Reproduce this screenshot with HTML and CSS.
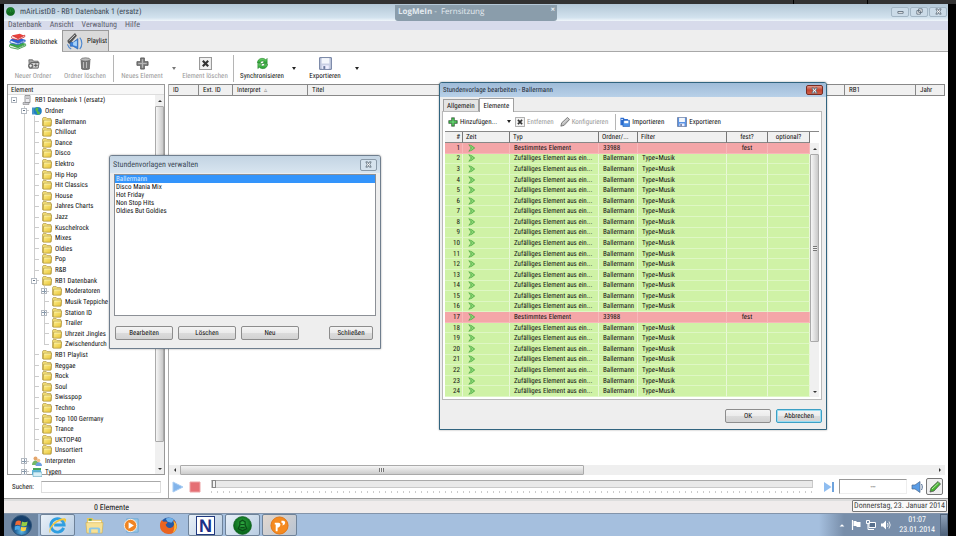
FILE: index.html
```html
<!DOCTYPE html>
<html lang="de">
<head>
<meta charset="utf-8">
<title>mAirListDB - RB1 Datenbank 1 (ersatz)</title>
<link rel="stylesheet" href="styles.css">
</head>
<body>
<svg class="sprite" aria-hidden="true">
  <defs>
    <linearGradient id="gFolder" x1="0" y1="0" x2="1" y2="1"><stop offset="0" stop-color="#fff08c"/><stop offset="1" stop-color="#e6c238"/></linearGradient>
    <linearGradient id="gGreen" x1="0" y1="0" x2="0" y2="1"><stop offset="0" stop-color="#6fd06a"/><stop offset="1" stop-color="#1f9a2c"/></linearGradient>
    <radialGradient id="gBall" cx=".5" cy=".4"><stop offset="0" stop-color="#2ea640"/><stop offset="1" stop-color="#0b6a1d"/></radialGradient>
    <radialGradient id="gOrb" cx=".5" cy=".8"><stop offset="0" stop-color="#5fb9e6"/><stop offset=".6" stop-color="#25659c"/><stop offset="1" stop-color="#173f6b"/></radialGradient>
  </defs>
  <symbol id="folder" viewBox="0 0 10 10"><path d="M.4 2 1.200.6h3l1 1h3.600l.4 1.400V8.500H.4z" fill="#f6e27a" stroke="#9c8230" stroke-width=".6"/><path d="M1.600 3.200h8l-.8 6H1.200z" fill="url(#gFolder)" stroke="#a58a30" stroke-width=".6"/><path d="M2.300 4h6.500" stroke="#fffbd0" stroke-width=".6"/></symbol>
  <symbol id="server" viewBox="0 0 10 10"><path d="M3 .5h5v7H3z" fill="#ececf0" stroke="#777" stroke-width=".7"/><path d="M4 2h3M4 3.500h3" stroke="#888" stroke-width=".6"/><path d="M1 7.500h6v2H1z" fill="#c9c9d0" stroke="#777" stroke-width=".5"/></symbol>
  <symbol id="globe" viewBox="0 0 10 10"><path d="M0 1.500h5v7H0z" fill="#4a95c9"/><circle cx="5.800" cy="5" r="4" fill="#1f7fc4"/><path d="M4 2c2-1 3 0 2 2s2 1 2 3-3 2-3 0-3-2-1-5z" fill="#57b947"/></symbol>
  <symbol id="people" viewBox="0 0 10 10"><circle cx="3.500" cy="2.500" r="2" fill="#e3a56b"/><path d="M0 9c0-6 7-6 7 0z" fill="#73b865"/><circle cx="6.500" cy="4.500" r="1.800" fill="#f2c08e"/><path d="M3.500 10c0-5 6.500-5 6.500 0z" fill="#6e9fe0"/></symbol>
  <symbol id="types" viewBox="0 0 10 10"><path d="M1 1h8v5H1z" fill="#46a857"/><path d="M0 3h9v5H0z" fill="#63b7d9"/><path d="M1 5h9v4.500H1z" fill="#d5eef6" stroke="#4b98b5" stroke-width=".5"/></symbol>
  <symbol id="arrow" viewBox="0 0 10 10"><path d="M1 .8 4.500 2 8.500 5 4.500 8 1 9.200 3.800 5z" fill="#66c455" stroke="#3f9a38" stroke-width=".6"/><path d="M2.500 2.200 6.500 5 2.500 7.800" fill="none" stroke="#b9e7a0" stroke-width=".6"/></symbol>
  <symbol id="books" viewBox="0 0 20 18"><path d="M1 11.500 11 9.500l8 2-9 4.500L1 13.500z" fill="#3aa84a"/><path d="M1 12.500c-1 2 0 3 1 3.300l8 1.700 8.500-3.700v-1.500L10 16z" fill="#e8f5e6" stroke="#2b9138" stroke-width=".9"/><path d="M2 6.500 11 5l7 2-8 4L2 8.500z" fill="#2b62d8"/><path d="M2 7.500c-1.500 1.500-1 3 0 3.300l8 1.700 8-3.500V7.500L10 11z" fill="#e5ecfb" stroke="#2458c4" stroke-width=".9"/><path d="M4 2 12 .5l5 2-7 4-6-2z" fill="#e8413c"/><path d="M4 2.500c-1.500 1-1.500 3 0 3.300l6 1.500 7.500-3.500V2L10 5.800z" fill="#fbeae9" stroke="#cf2e2c" stroke-width=".9"/></symbol>
  <symbol id="notes" viewBox="0 0 18 18"><path d="M1 8 9 0l2 3-7 8c-2 1-3-1-3-3z" fill="#555"/><path d="M3 8 9 2" stroke="#ddd"/><path d="M4 10h3l5-4v11l-5-3H4z" fill="#3e83dd" stroke="#205ba8" stroke-width=".7"/><path d="M7 10l4-2v6l-4-1z" fill="#a6d2fa"/><path d="M14 5c3 3 3 9 0 12M1 12c1 3 2 4 4 5" fill="none" stroke="#4e88d0" stroke-width="1.200"/></symbol>
  <symbol id="newfolder" viewBox="0 0 14 12"><path d="M2 2h4l1 1.500h5V5H4.500L2.500 10z" fill="#aaa" stroke="#555" stroke-width=".8"/><path d="M4 5h9l-1 6H2.500z" fill="#d8d8d8" stroke="#555" stroke-width=".9"/><circle cx="4" cy="8.500" r="2.800" fill="#666"/><path d="M4 6.900v3.200M2.400 8.500h3.200" stroke="#fff"/><path d="M9.500 6v4M7.500 8h4" stroke="#555"/></symbol>
  <symbol id="bin" viewBox="0 0 12 13"><path d="M1.500 2.500h9l-.7 9.500c-2 1-6 1-7.600 0z" fill="#777" stroke="#444" stroke-width=".6"/><ellipse cx="6" cy="2.500" rx="4.700" ry="1.700" fill="#bbb" stroke="#555" stroke-width=".6"/><path d="M4 5v6M7 5v6" stroke="#bbb"/></symbol>
  <symbol id="plus" viewBox="0 0 14 14"><path d="M5 1h4v4h4v4H9v4H5V9H1V5h4z" fill="currentColor" stroke="#444" stroke-width=".8"/><path d="M7 2.500v9M2.500 7h9" stroke="#fff" stroke-opacity=".4" stroke-width="1.200"/></symbol>
  <symbol id="cross" viewBox="0 0 12 12"><path d="M.5.5h11v11H.5z" fill="#f2f2f2" stroke="#999"/><path d="M3.500 3.500l5 5M8.500 3.500l-5 5" stroke="#333" stroke-width="2"/></symbol>
  <symbol id="sync" viewBox="0 0 14 13"><path d="M1.500 6c0-5 6-6.500 9-3.500L12 1v5.500H7L8.800 4.500C7 3 5 4 4.500 6z" fill="url(#gGreen)" stroke="#22802c" stroke-width=".6"/><path d="M12.500 7c0 5-6 6.500-9 3.500L2 12V6.500h5L5.200 8.500C7 10 9 9 9.500 7z" fill="url(#gGreen)" stroke="#22802c" stroke-width=".6"/></symbol>
  <symbol id="disk" viewBox="0 0 12 12"><path d="M.6.6h10.800v10.800H.6z" fill="currentColor" stroke="#68779a" stroke-width=".9"/><path d="M2.500 1h7v5h-7z" fill="#f4f7fc"/><path d="M3 7.800h6V11H3z" fill="#eef"/><path d="M4 8.400h1.800V11H4z" fill="#68779a"/></symbol>
  <symbol id="import" viewBox="0 0 12 12"><path d="M.5 1h4l1 1.500h4V10h-9z" fill="#2f6fd2"/><path d="M3.500 4h8v7.500h-8z" fill="#4a90e8" stroke="#1d56ad" stroke-width=".7"/><path d="M5 4.500h5v3H5z" fill="#fff"/><path d="M1.500 3h2" stroke="#fff"/></symbol>
  <symbol id="pencil" viewBox="0 0 12 12"><path d="M1 11l1-4 7-6.500L11.500 3 5 10z" fill="currentColor" stroke="#555" stroke-width=".8"/><path d="M3 8 9.500 2" stroke="#fff" stroke-opacity=".6"/></symbol>
  <symbol id="speaker" viewBox="0 0 12 12"><path d="M1 4h3l5-3.500v11L4 8H1z" fill="currentColor" stroke="#4b678e" stroke-width=".7"/><path d="M10.500 3c1 2 1 4 0 6" fill="none" stroke="#4b678e"/></symbol>
  <symbol id="ball" viewBox="0 0 18 18"><circle cx="9" cy="9" r="8.500" fill="url(#gBall)" stroke="#0a5a18" stroke-width=".6"/><path d="M6.500 5.500 9 4l2.500 1.500v3L13 12l-4 2-4-2 1.500-3.500z" fill="none" stroke="#0a4d18" stroke-width="1.200"/><path d="M7 8h4M7 11h4" stroke="#0a4d18"/></symbol>
</svg>

<div class="session-strip"><i></i><i></i></div>
<main class="window">
  <header class="titlebar">
    <svg class="app-icon"><use href="#ball"/></svg>
    <h1>mAirListDB - RB1 Datenbank 1 (ersatz)</h1>
    <div class="window-buttons">
      <button aria-label="Minimieren"><svg viewBox="0 0 8 8"><path d="M1 4h6v2H1z"/></svg></button>
      <button aria-label="Wiederherstellen"><svg viewBox="0 0 8 8"><path d="M3 1h4v4H3zM1 3h4v4H1z"/></svg></button>
      <button aria-label="Schließen"><svg viewBox="0 0 8 8"><path d="M1 1h2l1 2 1-2h2L5.500 4 7 7H5L4 5 3 7H1l1.500-3z"/></svg></button>
    </div>
  </header>
  <nav class="menubar"><a href="#">Datenbank</a><a href="#">Ansicht</a><a href="#">Verwaltung</a><a href="#">Hilfe</a></nav>
  <div class="main-tabs">
    <button class="main-tab active"><svg><use href="#books"/></svg>Bibliothek</button>
    <button class="main-tab"><svg><use href="#notes"/></svg>Playlist</button>
  </div>
  <div class="toolbar">
    <button class="tool off"><svg><use href="#newfolder"/></svg>Neuer Ordner</button>
    <button class="tool off"><svg><use href="#bin"/></svg>Ordner löschen</button>
    <span class="separator"></span>
    <button class="tool off plus"><svg><use href="#plus"/></svg>Neues Element</button>
    <button class="drop off" aria-label="Mehr"></button>
    <button class="tool off"><svg><use href="#cross"/></svg>Element löschen</button>
    <span class="separator"></span>
    <button class="tool"><svg><use href="#sync"/></svg>Synchronisieren</button>
    <button class="drop" aria-label="Mehr"></button>
    <button class="tool save"><svg><use href="#disk"/></svg>Exportieren</button>
    <button class="drop" aria-label="Mehr"></button>
  </div>

  <div class="content">
    <section class="side">
      <div class="tree-box">
        <div class="tree-head">Element</div>
        <div class="tree-body">
          <ul class="tree" id="tree"></ul>
          <div class="vscroll"><span class="up"></span><span class="thumb"></span><span class="down"></span></div>
        </div>
      </div>
      <div class="search"><label for="q">Suchen:</label><input id="q" type="text"></div>
    </section>
    <section class="list">
      <table class="list-table">
        <colgroup><col class="c-id"><col class="c-ext"><col class="c-int"><col><col class="c-rb"><col class="c-year"></colgroup>
        <thead><tr><th>ID</th><th>Ext. ID</th><th>Interpret <span class="sort">▵</span></th><th>Titel</th><th>RB1</th><th>Jahr</th></tr></thead>
      </table>
      <div class="hscroll"><span class="left"></span><span class="hthumb"><i></i></span><span class="right"></span></div>
      <div class="player">
        <button class="play" aria-label="Abspielen"><svg viewBox="0 0 12 12"><path d="M1 1l10 5-10 5z" fill="#82b4ea" stroke="#a9cdf3"/></svg></button>
        <button class="stop" aria-label="Stopp"><svg viewBox="0 0 12 12"><path d="M1 1h10v10H1z" fill="#e56f74" stroke="#eda4a6"/></svg></button>
        <div class="seek"><input type="range" value="0" aria-label="Position"><div class="ticks"></div></div>
        <button class="next" aria-label="Weiter"><svg viewBox="0 0 12 12"><path d="M1 1l7.500 5L1 11z" fill="#8fbdf0"/><path d="M9 1h2v10H9z" fill="#6fa3dc"/></svg></button>
        <output class="display">---</output>
        <button class="sound" aria-label="Ton"><svg><use href="#speaker"/></svg></button>
        <button class="edit" aria-label="Bearbeiten"><svg><use href="#pencil"/></svg></button>
      </div>
    </section>
  </div>
  <footer class="status">0 Elemente</footer>
</main>

<footer class="taskbar">
  <button class="start" aria-label="Start"><svg viewBox="0 0 22 22"><circle cx="11" cy="11" r="10.500" fill="url(#gOrb)" stroke="#2b5278"/><path d="M5 7q3-2 5.500-.5L9.800 11Q7 9.500 4.200 11z" fill="#ee6a35"/><path d="M11.500 6.800q3 1.500 6 0L16.500 11q-3 1.500-5.700.2z" fill="#96cf43"/><path d="M4 12q3-1.500 5.600 0L9 16q-2.500-1.500-5 0z" fill="#4aa7e9"/><path d="M10.600 12.300q3 1.300 5.700 0l-1 4q-2.500 1.300-5.200 0z" fill="#ffd044"/></svg></button>
  <button class="task open" aria-label="Internet Explorer"><svg viewBox="0 0 20 20"><path d="M16.500 12.500A7 7 0 1 1 17 9.500H6.500" fill="none" stroke="#2f9ee0" stroke-width="3"/><path d="M2 18C-1 13 8 2 18 2.500 20 3 19 6 17.500 8 18 5 17 4 14 4.800 8 6 2 13 2.500 16.500z" fill="#f3c63a"/></svg></button>
  <button class="task" aria-label="Explorer"><svg viewBox="0 0 20 20"><path d="M2 2h6l1 2h9v13H2z" fill="#e6c55f"/><path d="M3 5h14v4H3z" fill="#fffbe5"/><path d="M4 3h3v2H4z" fill="#55a54e"/><path d="M1 7h18l-1 11H2z" fill="#f8e195" stroke="#d3ab42" stroke-width=".6"/><path d="M4 18v-4q0-2 2-2h8q2 0 2 2v4h-2.500v-4h-7v4z" fill="#8bc7e8"/></svg></button>
  <button class="task" aria-label="Media Player"><svg viewBox="0 0 20 20"><path d="M5 3h12v14H5z" fill="#9cc9e9" stroke="#6faad3"/><circle cx="9" cy="10" r="6.500" fill="#f08422" stroke="#fff0dd"/><path d="M7 6.500 12.500 10 7 13.500z" fill="#fff"/></svg></button>
  <button class="task" aria-label="Firefox"><svg viewBox="0 0 20 20"><circle cx="10" cy="10" r="8.500" fill="#2459a5"/><path d="M7 3q5-3 9 1l-3 3-4-1z" fill="#6eb0e8"/><path d="M2.500 4.500 5 6q3-1 4 1L7 9q1 4 5 3.500 3-.5 4-3.500 0-3-1-5 4 3 3.800 8Q17 19 10 19 1 18 1 10 1 7 2.500 4.500z" fill="#ea6420"/><path d="M15 5q4 3 3.500 7-1 4-4 5.500 3-5 .5-12.500z" fill="#f9b936"/></svg></button>
  <button class="task open" aria-label="N"><span class="n-tile">N</span></button>
  <button class="task open" aria-label="mAirList"><svg><use href="#ball"/></svg></button>
  <button class="task warm" aria-label="Player"><svg viewBox="0 0 20 20"><circle cx="10" cy="10" r="9" fill="#f58a1f" stroke="#e07412"/><path d="M5 7h4q2 0 2 2t-2 3H8v4H6V9H5zM12 5h2q2 0 2 2t-3 3q1-2 0-3h-1z" fill="#fff"/></svg></button>
  <div class="tray">
    <svg class="tri" viewBox="0 0 10 10"><path d="M2 7l3-3 3 3z" fill="#fff"/></svg>
    <svg viewBox="0 0 10 10"><path d="M1.500 0v10" stroke="#fff" stroke-width="1.200"/><path d="M2.500 1h3v1h4v5h-4V6h-3z" fill="#fff"/></svg>
    <svg viewBox="0 0 10 10"><path d="M3 2.500h6.500v5H3z" fill="#58708d" stroke="#fff"/><path d="M.5.5h3v3h-3zM2 4v5.500h6" fill="none" stroke="#fff"/></svg>
    <svg viewBox="0 0 10 10"><path d="M0 3.500h2L5 .5v9L2 6.500H0z" fill="#fff"/><path d="M6.500 3q1 2 0 4M8 1.500q2.500 3.500 0 7" fill="none" stroke="#fff" stroke-width=".8"/></svg>
    <time class="clock">01:07<br>23.01.2014</time>
    <button class="peek" aria-label="Desktop anzeigen"></button>
  </div>
</footer>

<div class="remote-tab"><b>LogMeIn</b> -&nbsp; Fernsitzung<button aria-label="Leiste schließen">×</button></div>
<div class="tooltip">Donnerstag, 23. Januar 2014</div>

<section class="dialog manage" role="dialog" aria-labelledby="t1">
  <header class="dialog-title"><h2 id="t1">Stundenvorlagen verwalten</h2><button class="close pale" aria-label="Schließen"><svg viewBox="0 0 8 8"><path d="M1 1h2l1 2 1-2h2L5.500 4 7 7H5L4 5 3 7H1l1.500-3z"/></svg></button></header>
  <ul class="listbox" role="listbox" aria-label="Stundenvorlagen">
    <li role="option" aria-selected="true">Ballermann</li>
    <li role="option">Disco Mania Mix</li>
    <li role="option">Hot Friday</li>
    <li role="option">Non Stop Hits</li>
    <li role="option">Oldies But Goldies</li>
  </ul>
  <div class="manage-buttons"><button class="btn">Bearbeiten</button><button class="btn">Löschen</button><button class="btn">Neu</button><button class="btn end">Schließen</button></div>
</section>

<section class="dialog editor" role="dialog" aria-labelledby="t2">
  <header class="dialog-title"><h2 id="t2">Stundenvorlage bearbeiten - Ballermann</h2><button class="close red" aria-label="Schließen"><svg viewBox="0 0 8 8"><path d="M1 1h2l1 2 1-2h2L5.500 4 7 7H5L4 5 3 7H1l1.500-3z"/></svg></button></header>
  <div class="tabs"><button class="tab">Allgemein</button><button class="tab active">Elemente</button></div>
  <div class="page">
    <div class="page-tools">
      <button class="ptool add"><svg><use href="#plus"/></svg>Hinzufügen...</button>
      <button class="drop" aria-label="Mehr"></button>
      <button class="ptool off"><svg><use href="#cross"/></svg>Entfernen</button>
      <button class="ptool off pen"><svg><use href="#pencil"/></svg>Konfigurieren</button>
      <span class="separator"></span>
      <button class="ptool imp"><svg><use href="#import"/></svg>Importieren</button>
      <button class="ptool save"><svg><use href="#disk"/></svg>Exportieren</button>
    </div>
    <div class="grid-box">
      <table class="grid">
        <colgroup><col class="g-n"><col class="g-time"><col class="g-type"><col class="g-folder"><col><col class="g-fix"><col class="g-opt"></colgroup>
        <thead><tr><th>#</th><th>Zeit</th><th>Typ</th><th>Ordner/...</th><th>Filter</th><th>fest?</th><th>optional?</th></tr></thead>
        <tbody id="rows"></tbody>
      </table>
      <div class="vscroll"><span class="up"></span><span class="thumb"><i></i></span><span class="down"></span></div>
    </div>
  </div>
  <div class="dialog-buttons"><button class="btn">OK</button><button class="btn default">Abbrechen</button></div>
</section>
<script src="app.js"></script>
</body>
</html>
```
FILE: styles.css
```css
* { box-sizing: border-box; }
html, body { height: 100%; }
body {
  margin: 0;
  background: #000;
  color: #111;
  font: 7px/10px "Roboto Condensed", "DejaVu Sans Condensed", sans-serif;
  text-rendering: geometricPrecision;
  display: flex;
  flex-direction: column;
  overflow: hidden;
  position: relative;
}
button, input { font: inherit; color: inherit; margin: 0; padding: 0; text-rendering: inherit; }
button { border: 0; background: none; white-space: nowrap; }
h1, h2, ul { margin: 0; padding: 0; font-weight: normal; list-style: none; }
h1, h2 { font-size: 8px; line-height: 12px; }
a { color: inherit; text-decoration: none; }
svg { display: block; flex: none; width: 10px; height: 10px; }
.sprite { position: absolute; width: 0; height: 0; }
table { border-collapse: separate; border-spacing: 0; table-layout: fixed; width: 100%; }
th { font-weight: normal; text-align: left; }

.session-strip { flex: none; height: 4px; background: #323232; display: flex; justify-content: flex-end; gap: 73px; padding-right: 88px; }
.session-strip i { width: 1px; background: #000; }

.window { flex: 1; min-height: 0; margin: 0 8px 0 4px; background: #fff; display: flex; flex-direction: column; }
.titlebar { flex: none; height: 17px; display: flex; align-items: center; gap: 5px; padding: 0 1px 2px 2px; background: linear-gradient(#b3c7d6, #d2e2ee 80%, #f0f6fa); color: #3d4a56; }
.titlebar h1 { flex: 1; }
.app-icon { width: 9px; height: 9px; }
.window-buttons { display: flex; gap: 1px; }
.window-buttons button { width: 18px; height: 10px; display: grid; place-items: center; border: 1px solid #a3b6c5; border-radius: 2px; background: #cbdbe8; }
.window-buttons svg, .close svg { width: 7px; height: 7px; fill: #fff; stroke: #5e6d7a; }
.menubar { flex: none; height: 9px; display: flex; gap: 8px; padding-left: 4px; background: #d7dbeb; color: #5c606c; font-size: 8px; line-height: 8px; }

.main-tabs { flex: none; height: 22px; display: flex; align-items: flex-end; background: #eee; border-bottom: 1px solid #a8a8a8; padding-right: 1px; }
.main-tab { display: flex; align-items: center; gap: 3px; width: 47px; height: 21px; padding: 0 3px; background: #dadada; border: 1px solid #9a9a9a; border-bottom: 0; }
.main-tab.active { width: 58px; height: 22px; padding: 0 4px; margin-bottom: -1px; background: #fff; border-color: #fff; }
.main-tab svg { width: 18px; height: 17px; }

.toolbar { flex: none; height: 32px; display: flex; align-items: stretch; gap: 2px; padding: 3px 0 2px 4px; }
.tool { display: flex; flex-direction: column; align-items: center; gap: 1px; width: 50px; padding-top: 2px; color: #111; }
.tool svg { width: 13px; height: 13px; }
.off, .tool.off { color: #999; }
.plus svg { color: #888; }
.save svg { color: #c9d0e4; }
.separator { width: 1px; margin: 0 1px; background: #b5b5b5; }
.drop { width: 9px; display: grid; place-items: center; }
.drop::before { content: ""; border: 2px solid transparent; border-top: 3px solid #222; border-bottom: 0; }
.drop.off::before { border-top-color: #777; }

.content { flex: 1; min-height: 0; display: grid; grid-template-columns: 161px 1fr; grid-template-rows: 100%; gap: 3px; padding-right: 3px; border-bottom: 1px solid #999; }
.side, .list { display: flex; flex-direction: column; min-height: 0; min-width: 0; }
.side { padding-left: 3px; }
.tree-box { flex: 1; min-height: 0; display: flex; flex-direction: column; border: 1px solid #999; }
.tree-head { flex: none; height: 10px; line-height: 10px; padding-left: 3px; background: #f7f7f7; border-bottom: 1px solid #ddd; }
.tree-body { flex: 1; min-height: 0; display: flex; }
.tree { flex: 1; min-width: 0; height: calc(100% + 3px); display: grid; grid-auto-rows: 1fr; }
.tree li { display: flex; align-items: center; min-height: 0; white-space: nowrap; }
.tree svg { margin: 0 3px; }
.cell { align-self: stretch; width: 10px; flex: none; display: grid; place-items: center; }
.cell:first-child { width: 11px; }
.line { background: linear-gradient(#ccc, #ccc) 5px 0 / 1px 100% no-repeat; }
.line.branch { background: linear-gradient(#ccc, #ccc) 5px 0 / 1px 100% no-repeat, linear-gradient(#ccc, #ccc) 5px 50% / 5px 1px no-repeat; }
.line.last { background: linear-gradient(#ccc, #ccc) 5px 0 / 1px 50% no-repeat, linear-gradient(#ccc, #ccc) 5px 50% / 5px 1px no-repeat; }
.toggle { width: 6px; height: 6px; border: 1px solid #b4bac2; background: linear-gradient(#678, #678) 50% 50% / 2px 1px no-repeat #fff; }
.toggle.closed { background: linear-gradient(#89a, #89a) 50% 50% / 4px 1px no-repeat, linear-gradient(#89a, #89a) 50% 50% / 1px 4px no-repeat, #fff; }

.vscroll { flex: none; width: 9px; display: flex; flex-direction: column; background: #f0f0f0; }
.up, .down { flex: none; height: 11px; display: grid; place-items: center; }
.up::before { content: ""; border: 2px solid transparent; border-top: 0; border-bottom: 2px solid #333; }
.down::before { content: ""; border: 2px solid transparent; border-bottom: 0; border-top: 2px solid #333; }
.thumb { flex: 1; display: grid; place-items: center; border: 1px solid #aaa; border-radius: 1px; background: linear-gradient(90deg, #f6f6f6, #c9c9c9); }
.tree-body .down { margin-top: 21px; }
.search { flex: none; height: 23px; display: flex; align-items: center; gap: 7px; padding-left: 5px; }
.search input { flex: 1; min-width: 0; height: 12px; border: 1px solid #ddd; border-top-color: #aaa; margin-right: 4px; background: #fff; }

.list { border-left: 1px solid #aaa; }
.list-table th { height: 11px; padding: 0 4px; background: #f0f0f0; border: 1px solid #888; border-left: 0; }
.c-id { width: 30px; } .c-ext { width: 34px; } .c-int { width: 75px; } .c-rb { width: 71px; } .c-year { width: 29px; }
.sort { color: #888; margin-left: 2px; }
.hscroll { flex: none; height: 10px; margin-top: auto; display: flex; background: #efefef; }
.left, .right { width: 11px; display: grid; place-items: center; }
.left::before { content: ""; border: 2px solid transparent; border-left: 0; border-right-color: #333; }
.right::before { content: ""; border: 2px solid transparent; border-right: 0; border-left-color: #333; }
.right { margin-left: auto; }
.hthumb { width: 52%; border: 1px solid #aaa; border-radius: 1px; background: linear-gradient(#f4f4f4, #ccc); display: grid; place-items: center; }
.hthumb i { width: 5px; height: 4px; background: repeating-linear-gradient(90deg, #777 0 1px, #eee 1px 2px); }
.player { flex: none; height: 23px; display: flex; align-items: center; padding: 0 2px 0 3px; }
.player svg { width: 12px; height: 12px; }
.stop { margin-left: 5px; }
.seek { flex: 1; margin: 0 10px 0 10px; }
.seek input { display: block; width: 100%; height: 8px; appearance: none; background: #e9e9e9; border: 1px solid #c9c9c9; border-top-color: #aaa; }
.seek input::-webkit-slider-thumb { appearance: none; width: 4px; height: 8px; background: #f4f4f4; border: 1px solid #888; }
.ticks { height: 2px; margin-top: 3px; background: repeating-linear-gradient(90deg, #ccc 0 1px, transparent 1px 6px); }
.display { width: 68px; height: 15px; margin: 0 4px; text-align: center; line-height: 15px; border: 1px solid #999; border-right-color: #eee; border-bottom-color: #eee; }
.sound { color: #5a9de6; }
.edit { display: grid; place-items: center; width: 17px; height: 17px; margin-left: 3px; border: 1px solid #777; border-radius: 2px; background: #efefef; color: #44b52d; }
.status { flex: none; height: 14px; padding-left: 90px; border-top: 2px solid #ddd; background: #f0ecec; font-size: 8px; line-height: 13px; }

.taskbar { flex: none; height: 23px; margin: 0 8px 0 4px; display: flex; gap: 2px; background: linear-gradient(90deg, #7890ac, #a5bfde 50px, #a5bfde 815px, #788eaa 840px); border-top: 1px solid #8394aa; }
.start { width: 34px; display: grid; place-items: center; background: #6f87a3; }
.start svg { width: 21px; height: 21px; }
.task { width: 35px; display: grid; place-items: center; }
.task svg { width: 19px; height: 19px; }
.open, .warm { border: 1px solid #6e8299; border-radius: 2px; background: linear-gradient(135deg, #e8f0f8, #b9cde2); }
.warm { background: linear-gradient(135deg, #e3d8cf, #b7c3d2); }
.n-tile { width: 19px; height: 19px; background: #fff; border: 1px solid #223a80; color: #1b2e86; font: bold 18px/18px "Liberation Sans", sans-serif; }
.tray { margin-left: auto; display: flex; align-items: center; gap: 5px; color: #fff; }
.tray .tri { width: 8px; }
.clock { margin-left: 3px; text-align: center; font-size: 8px; line-height: 10px; }
.peek { width: 8px; height: 100%; background: linear-gradient(#8da0b8, #4f637c); border: 1px solid #53667e; }

.remote-tab { position: absolute; left: 395px; top: 5px; width: 162px; height: 16px; padding: 1px 3px; border-radius: 0 0 3px 3px; background: #8a9dab; color: #e4ebf0; font: 8px/12px "Open Sans", sans-serif; }
.remote-tab button { position: absolute; right: 2px; top: -1px; font-weight: bold; }
.tooltip { position: absolute; right: 9px; bottom: 24px; padding: 0 1px; border: 1px solid #777; border-radius: 1px; background: #fafafa; color: #444; font-size: 8px; line-height: 10px; }

.dialog { position: absolute; display: flex; flex-direction: column; border: 1px solid #6f7e8e; border-radius: 3px 3px 0 0; background: #eee; box-shadow: 0 0 2px #0006; }
.dialog-title { flex: none; display: flex; align-items: center; justify-content: space-between; padding: 0 3px; color: #1d2733; }
.close { height: 10px; width: 17px; display: grid; place-items: center; border: 1px solid #8a9aa9; border-radius: 2px; }
.close.pale { height: 12px; background: #d6e3ee; }
.close.red { background: linear-gradient(#e09a8c, #c2432f 50%, #cc6048); border-color: #7a2c22; }
.btn { height: 14px; width: 58px; border: 1px solid #8d8d8d; border-radius: 2px; background: linear-gradient(#f4f4f4, #ebebeb 50%, #dcdcdc 50%, #d2d2d2); }

.manage { left: 109px; top: 155px; width: 272px; }
.manage .dialog-title { height: 17px; background: linear-gradient(#c3d4e3, #d8e5f0); color: #3d4b58; border-radius: 2px 2px 0 0; }
.listbox { height: 142px; margin: 1px 4px 0; border: 1px solid #8c9096; background: #fff; line-height: 8px; }
.listbox li { padding-left: 1px; }
.listbox [aria-selected] { background: #3394fb; color: #dcecff; }
.manage-buttons { display: flex; gap: 5px; padding: 10px 7px 8px 5px; }
.manage-buttons .end { width: 44px; margin-left: auto; }

.editor { left: 439px; top: 82px; width: 388px; border-color: #31647f; }
.editor h2 { font-size: 7px; }
.editor .dialog-title { height: 14px; background: linear-gradient(#9fbbd8, #b8d0e8); border-radius: 2px 2px 0 0; }
.tabs { flex: none; height: 14px; display: flex; align-items: flex-end; padding: 0 3px; }
.tab { height: 12px; padding: 0 3px; border: 1px solid #a0a0a0; border-bottom: 0; background: #e4e4e4; }
.tab.active { height: 14px; padding: 0 4px; background: #fff; position: relative; margin-bottom: -1px; z-index: 1; }
.page { margin: 0 4px 0 2px; padding: 0 2px 2px; border: 1px solid #b9b9b9; background: #fff; }
.page-tools { display: flex; align-items: center; height: 19px; gap: 6px; padding-left: 3px; }
.page-tools .separator { height: 16px; margin: 0 -2px 0 1px; }
.page-tools .drop { margin: 0 -4px 0 1px; }
.ptool { display: flex; align-items: center; gap: 2px; }
.ptool.imp { margin-right: 7px; }
.add svg { color: #2bb038; }
.pen svg { color: #bbb; }
.ptool.save svg { color: #5b93e2; }
.grid-box { display: flex; border-top: 1px solid #888; }
.grid { flex: 1; height: 265px; }
.grid th { height: 11px; padding: 0 3px; line-height: 8px; background: #f0f0f0; border-right: 1px solid #777; border-bottom: 1px solid #888; }
.grid td { padding: 0 0 0 4px; line-height: 8px; white-space: nowrap; border-right: 1px solid #e9f8d8; border-bottom: 1px solid #def7c4; background: #cff2a6; }
.grid .fixed td { background: #f4a6a8; border-color: #f7b8ba; }
.grid th:first-child, .grid td:first-child { text-align: right; padding: 0 2px; }
.grid th:nth-child(n+6), .grid td:nth-child(n+6) { text-align: center; padding: 0; }
.grid svg { height: 8px; }
.g-n { width: 18px; } .g-time { width: 47px; } .g-type { width: 89px; } .g-folder { width: 39px; } .g-fix { width: 41px; } .g-opt { width: 42px; }
.grid-box .vscroll { margin-top: 11px; }
.grid-box .thumb { flex: 0 1 188px; }
.grid-box .thumb i { width: 4px; height: 5px; background: repeating-linear-gradient(#777 0 1px, #eee 1px 2px); }
.grid-box .down { margin-top: auto; }
.dialog-buttons { display: flex; justify-content: flex-end; gap: 5px; padding: 9px 4px 6px; }
.dialog-buttons .btn { width: 46px; }
.btn.default { border-color: #3c9fc4; box-shadow: inset 0 0 0 1px #9adcf2; }
```
FILE: app.js
```js
const icon = (name) => `<svg><use href="#${name}"/></svg>`;

// Each entry: depth, label, icon, toggle state
const folder = (depth, label, state) => [depth, label, "folder", state];
const nodes = [
  [0, "RB1 Datenbank 1 (ersatz)", "server", "open-node"],
  [1, "Ordner", "globe", "open-node"],
  ...["Ballermann", "Chillout", "Dance", "Disco", "Elektro", "Hip Hop", "Hit Classics", "House",
    "Jahres Charts", "Jazz", "Kuschelrock", "Mixes", "Oldies", "Pop", "R&amp;B"].map((n) => folder(2, n)),
  folder(2, "RB1 Datenbank", "open-node"),
  folder(3, "Moderatoren", "closed"),
  folder(3, "Musik Teppiche"),
  folder(3, "Station ID", "closed"),
  folder(3, "Trailer"),
  folder(3, "Uhrzeit Jingles"),
  folder(3, "Zwischendurch"),
  ...["RB1 Playlist", "Reggae", "Rock", "Soul", "Swisspop", "Techno", "Top 100 Germany", "Trance",
    "UKTOP40", "Unsortiert"].map((n) => folder(2, n)),
  [1, "Interpreten", "people", "closed"],
  [1, "Typen", "types", "closed"],
];

// A guide line continues while a later node of the same depth follows before a shallower one
const continues = (index, depth) => {
  for (let i = index + 1; i < nodes.length; i++) {
    if (nodes[i][0] < depth) return false;
    if (nodes[i][0] === depth) return true;
  }
  return false;
};

document.getElementById("tree").innerHTML = nodes.map(([depth, label, image, state], index) => {
  let cells = "";
  for (let d = 0; d <= depth; d++) {
    const more = continues(index, d);
    let kind = "";
    if (d === depth && d > 0) kind = more ? "line branch" : "line last";
    else if (d > 0 && more) kind = "line";
    cells += `<span class="cell ${kind}">${d === depth && state ? `<i class="toggle ${state}"></i>` : ""}</span>`;
  }
  return `<li>${cells}${icon(image)}${label}</li>`;
}).join("");

const fixedRows = [1, 17];
document.getElementById("rows").innerHTML = Array.from({ length: 24 }, (_, i) => {
  const n = i + 1;
  return fixedRows.includes(n)
    ? `<tr class="fixed"><td>${n}</td><td>${icon("arrow")}</td><td>Bestimmtes Element</td><td>33988</td><td></td><td>fest</td><td></td></tr>`
    : `<tr><td>${n}</td><td>${icon("arrow")}</td><td>Zufälliges Element aus ein...</td><td>Ballermann</td><td>Type=Musik</td><td></td><td></td></tr>`;
}).join("");
```
